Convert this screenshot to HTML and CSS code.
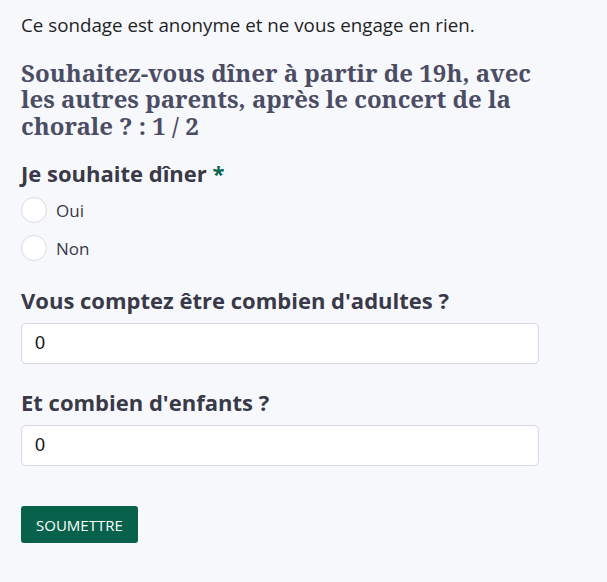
FILE: index.html
```html
<!DOCTYPE html>
<html lang="fr">
<head>
  <meta charset="UTF-8" />
  <title>Sondage</title>
  <link rel="stylesheet" href="styles.css">
</head>
<body>
  <div class="survey">
    <p class="intro">Ce sondage est anonyme et ne vous engage en rien.</p>

    <h2 class="survey-title">Souhaitez-vous dîner à partir de 19h, avec les autres parents, après le concert de la chorale ? : 1 / 2</h2>

    <form class="survey-form">
      <div class="field field-radio" role="radiogroup">
        <div class="field-label">Je souhaite dîner <span class="required">*</span></div>
        <div class="choices">
          <label class="choice">
            <input type="radio" name="diner" value="oui" />
            <span>Oui</span>
          </label>
          <label class="choice">
            <input type="radio" name="diner" value="non" />
            <span>Non</span>
          </label>
        </div>
      </div>

      <div class="field field-after-radio">
        <label class="field-label" for="adultes">Vous comptez être combien d'adultes ?</label>
        <input class="text-input" id="adultes" type="text" value="0" />
      </div>

      <div class="field">
        <label class="field-label" for="enfants">Et combien d'enfants ?</label>
        <input class="text-input" id="enfants" type="text" value="0" />
      </div>

      <button class="submit-btn" type="button">Soumettre</button>
    </form>
  </div>
</body>
</html>
```

FILE: styles.css
```css
*, *::before, *::after {
  box-sizing: border-box;
}

html, body {
  margin: 0;
  padding: 0;
  background: #f7f8fc;
}

body {
  font-family: 'Open Sans', 'Noto Sans', sans-serif;
  color: #23232b;
}

.survey {
  padding: 10.5px 21px 30px;
  width: 560px;
}

.intro {
  margin: 0;
  font-size: 18.75px;
  line-height: 27px;
  color: #1f1f26;
}

.survey-title {
  margin: 22px 0 0;
  font-family: 'Noto Serif', 'DejaVu Serif', serif;
  font-size: 24px;
  font-weight: bold;
  line-height: 26.5px;
  color: #4a4d63;
}

.survey-form {
  display: flex;
  flex-direction: column;
}

.field {
  margin-top: 22.5px;
  display: flex;
  flex-direction: column;
}

.field-radio {
  margin-top: 18.5px;
}

.field-after-radio {
  margin-top: 17.5px;
}

.field-label {
  font-size: 22px;
  font-weight: bold;
  line-height: 30px;
  color: #393948;
  margin-bottom: 8.5px;
}

.field-radio .field-label {
  margin-bottom: 3.5px;
}

.required {
  color: #0a6650;
}

.choices {
  display: flex;
  flex-direction: column;
}

.choice {
  display: flex;
  align-items: center;
  gap: 9px;
  height: 38px;
  font-size: 17px;
  color: #393948;
}

.choice input {
  appearance: none;
  margin: 0;
  width: 26px;
  height: 26px;
  border: 1px solid #d9dbe2;
  border-radius: 50%;
  background: #fff;
}

.text-input {
  width: 518px;
  height: 41px;
  padding: 0 13px;
  border: 1px solid #d8d9e2;
  border-radius: 5px;
  background: #fff;
  font-family: 'Liberation Sans', Arial, sans-serif;
  font-size: 18px;
  color: #111;
}

.submit-btn {
  align-self: flex-start;
  margin-top: 40px;
  height: 37px;
  padding: 0 15px;
  border: none;
  border-radius: 3px;
  background: #08614a;
  color: #fff;
  font-family: 'Open Sans', 'Noto Sans', sans-serif;
  font-size: 15px;
  text-transform: uppercase;
  cursor: pointer;
}
```
